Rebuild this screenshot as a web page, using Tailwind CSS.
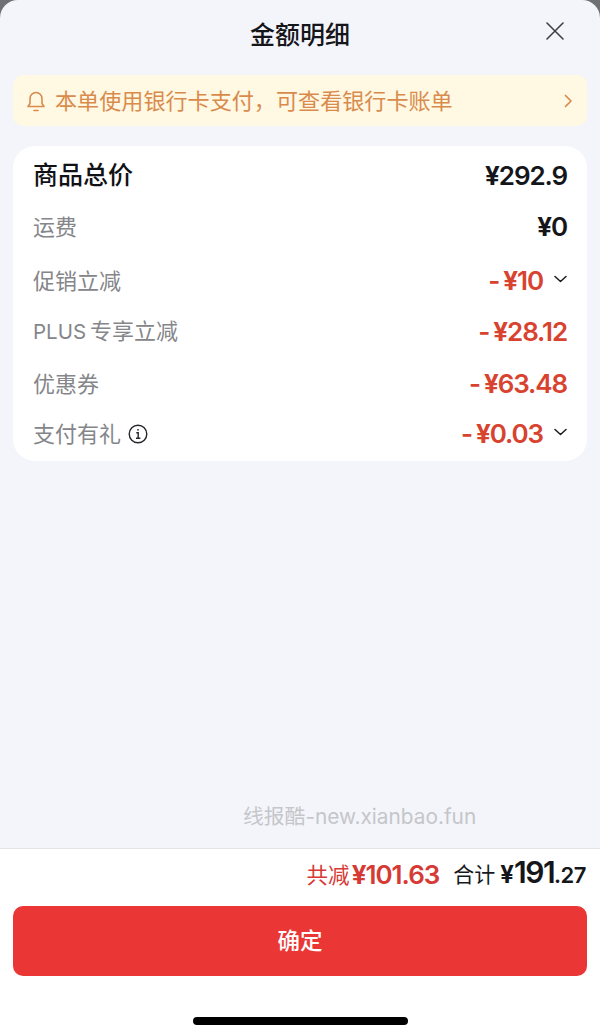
<!DOCTYPE html>
<html lang="zh-CN">
<head>
    <meta charset="UTF-8">
    <title>金额明细</title>
    <script src="https://cdn.jsdelivr.net/npm/@tailwindcss/browser@4"></script>
</head>
<body class="bg-[#6f7073] font-['Inter','Noto_Sans_CJK_SC',sans-serif]">
    <div class="relative flex flex-col h-[1036px] w-[600px] overflow-hidden rounded-t-[18px] bg-[#f4f5fa]">
        <!-- header -->
        <div class="relative flex h-[75px] shrink-0 items-center justify-center pb-[6px]">
            <h1 class="text-[25px] leading-[32px] font-medium text-[#15161a]">金额明细</h1>
            <svg class="absolute left-[546px] top-[22px] h-[18px] w-[18px] text-[#3f4045]" viewBox="0 0 18 18" fill="none" stroke="currentColor" stroke-width="1.6" stroke-linecap="round"><path d="M1 1l16 16M17 1L1 17"/></svg>
        </div>

        <!-- notice -->
        <div class="mx-[13px] flex h-[51px] shrink-0 items-center rounded-[10px] bg-[#fff8e3] pl-[13px] pr-[14px] text-[#d98b4c]">
            <svg class="h-[22px] w-[20px] shrink-0" viewBox="0 0 20 22" fill="none" stroke="currentColor" stroke-width="1.6" stroke-linecap="round" stroke-linejoin="round"><path d="M2 16.5h16l-2-3V8.5a6 6 0 0 0-12 0v5z"/><path d="M8 20.5h4"/></svg>
            <span class="ml-[9px] text-[22.1px] leading-[30px]">本单使用银行卡支付，可查看银行卡账单</span>
            <svg class="ml-auto h-[14px] w-[9px]" viewBox="0 0 9 14" fill="none" stroke="currentColor" stroke-width="1.7" stroke-linecap="round" stroke-linejoin="round"><path d="M1.5 1.5L7 7l-5.5 5.5"/></svg>
        </div>

        <!-- price card -->
        <div class="mx-[13px] mt-[20px] h-[315px] shrink-0 rounded-[22px] bg-white px-[20px] pt-[8px]">
            <div class="flex h-[41px] items-center justify-between">
                <span class="text-[25px] leading-[32px] font-medium text-[#111216]">商品总价</span>
                <span class="mt-[2px] text-[26px] leading-[32px] font-semibold tracking-[-1.1px] text-[#15161a]"><span class="font-bold">¥</span>292.9</span>
            </div>
            <div class="mt-[11px] flex h-[41px] items-center justify-between">
                <span class="text-[22px] leading-[30px] text-[#85868a]">运费</span>
                <span class="text-[26px] leading-[32px] font-semibold tracking-[-1.1px] text-[#15161a]"><span class="font-bold">¥</span>0</span>
            </div>
            <div class="mt-[13px] flex h-[41px] items-center justify-between">
                <span class="text-[22px] leading-[30px] text-[#85868a]">促销立减</span>
                <div class="flex items-center">
                    <span class="text-[26px] leading-[32px] font-semibold tracking-[-1.1px] text-[#d8432f]">-<span class="ml-[4px] font-bold">¥</span>10</span>
                    <svg class="ml-[11px] mb-[4px] h-[8px] w-[13px] text-[#1a1b1f]" viewBox="0 0 13 8" fill="none" stroke="currentColor" stroke-width="1.5" stroke-linecap="round" stroke-linejoin="round"><path d="M1 1.5l5.5 5 5.5-5"/></svg>
                </div>
            </div>
            <div class="mt-[10px] flex h-[41px] items-center justify-between">
                <span class="text-[22px] leading-[30px] text-[#85868a]"><span class="text-[20.5px]">PLUS</span><span class="ml-[4px]">专享立减</span></span>
                <span class="text-[26px] leading-[32px] font-semibold tracking-[-1.1px] text-[#d8432f]">-<span class="ml-[4px] font-bold">¥</span>28.12</span>
            </div>
            <div class="mt-[11px] flex h-[41px] items-center justify-between">
                <span class="text-[22px] leading-[30px] text-[#85868a]">优惠券</span>
                <span class="text-[26px] leading-[32px] font-semibold tracking-[-1.1px] text-[#d8432f]">-<span class="ml-[4px] font-bold">¥</span>63.48</span>
            </div>
            <div class="mt-[9px] flex h-[41px] items-center justify-between">
                <div class="flex items-center">
                    <span class="text-[22px] leading-[30px] text-[#85868a]">支付有礼</span>
                    <svg class="ml-[7px] h-[20px] w-[20px] text-[#25262a]" viewBox="0 0 20 20" fill="none" stroke="currentColor" stroke-width="1.4"><circle cx="10" cy="10" r="8.8"/><path d="M8.3 8.8H10.2V14M8 14.2h4.4"/><circle cx="10" cy="5.8" r="0.9" fill="currentColor" stroke="none"/></svg>
                </div>
                <div class="flex items-center">
                    <span class="text-[26px] leading-[32px] font-semibold tracking-[-1.1px] text-[#d8432f]">-<span class="ml-[4px] font-bold">¥</span>0.03</span>
                    <svg class="ml-[11px] mb-[4px] h-[8px] w-[13px] text-[#1a1b1f]" viewBox="0 0 13 8" fill="none" stroke="currentColor" stroke-width="1.5" stroke-linecap="round" stroke-linejoin="round"><path d="M1 1.5l5.5 5 5.5-5"/></svg>
                </div>
            </div>
        </div>

        <!-- watermark -->
        <div class="mt-auto flex h-[32px] shrink-0 items-center pl-[243px] text-[20.8px] leading-[28px] text-[#c5c6ca]">线报酷-new.xianbao.fun</div>
        <div class="h-[15px] shrink-0"></div>

        <!-- footer -->
        <div class="relative h-[188px] shrink-0 border-t border-[#e4e5e9] bg-white">
            <div class="flex h-[51px] items-center justify-end pr-[14px]">
                <span class="text-[21.5px] leading-[30px] text-[#d63a35]">共减</span>
                <span class="ml-[2px] text-[26px] leading-[32px] font-semibold tracking-[-1px] text-[#d63a35]"><span class="font-bold">¥</span>101.63</span>
                <span class="ml-[14px] text-[21px] leading-[30px] text-[#17181c]">合计</span>
                <span class="ml-[5px] flex items-baseline font-semibold text-[#15161a]">
                    <span class="text-[24px] font-bold tracking-[-1px]">¥</span><span class="ml-[1px] text-[30px] leading-[32px] tracking-[-1.5px]">191</span><span class="text-[22px] tracking-[-0.5px]">.27</span>
                </span>
            </div>
            <button class="mx-[13px] mt-[6px] flex h-[70px] w-[574px] items-center justify-center rounded-[10px] bg-[#ea3634] text-[22.5px] font-medium text-white">确定</button>
            <div class="absolute bottom-[11px] left-[193px] h-[8px] w-[215px] rounded-full bg-black"></div>
        </div>
    </div>
</body>
</html>
